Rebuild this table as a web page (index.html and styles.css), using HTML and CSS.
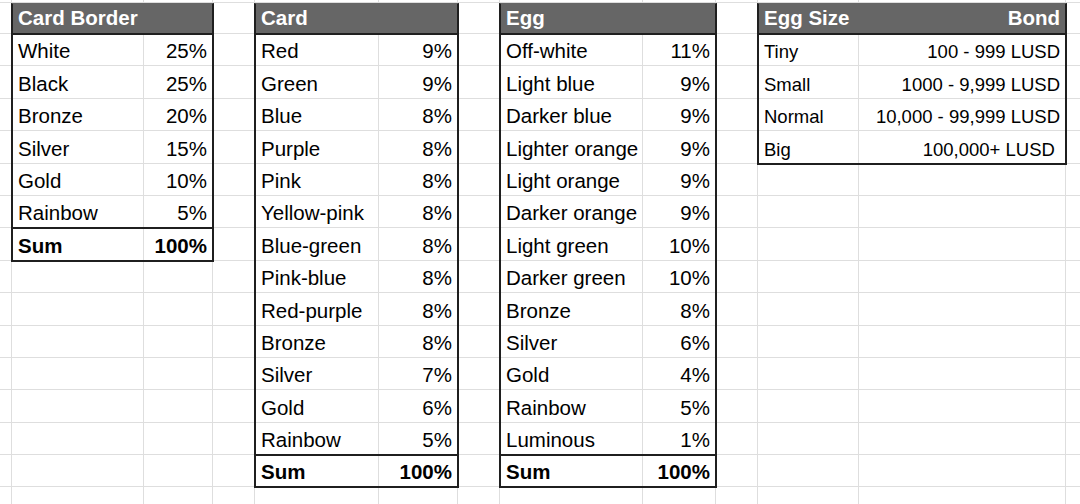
FILE: index.html
```html
<!DOCTYPE html>
<html lang="en">
<head>
<meta charset="utf-8">
<title>Sheet</title>
<link rel="stylesheet" href="styles.css">
</head>
<body>
<div class="sheet">
  <div class="tbl t-border">
    <div class="row head"><div class="cell">Card Border</div><div class="cell num"></div></div>
    <div class="row"><div class="cell">White</div><div class="cell num">25%</div></div>
    <div class="row"><div class="cell">Black</div><div class="cell num">25%</div></div>
    <div class="row"><div class="cell">Bronze</div><div class="cell num">20%</div></div>
    <div class="row"><div class="cell">Silver</div><div class="cell num">15%</div></div>
    <div class="row"><div class="cell">Gold</div><div class="cell num">10%</div></div>
    <div class="row"><div class="cell">Rainbow</div><div class="cell num">5%</div></div>
    <div class="row sum"><div class="cell">Sum</div><div class="cell num">100%</div></div>
  </div>

  <div class="tbl t-card">
    <div class="row head"><div class="cell">Card</div><div class="cell num"></div></div>
    <div class="row"><div class="cell">Red</div><div class="cell num">9%</div></div>
    <div class="row"><div class="cell">Green</div><div class="cell num">9%</div></div>
    <div class="row"><div class="cell">Blue</div><div class="cell num">8%</div></div>
    <div class="row"><div class="cell">Purple</div><div class="cell num">8%</div></div>
    <div class="row"><div class="cell">Pink</div><div class="cell num">8%</div></div>
    <div class="row"><div class="cell">Yellow-pink</div><div class="cell num">8%</div></div>
    <div class="row"><div class="cell">Blue-green</div><div class="cell num">8%</div></div>
    <div class="row"><div class="cell">Pink-blue</div><div class="cell num">8%</div></div>
    <div class="row"><div class="cell">Red-purple</div><div class="cell num">8%</div></div>
    <div class="row"><div class="cell">Bronze</div><div class="cell num">8%</div></div>
    <div class="row"><div class="cell">Silver</div><div class="cell num">7%</div></div>
    <div class="row"><div class="cell">Gold</div><div class="cell num">6%</div></div>
    <div class="row"><div class="cell">Rainbow</div><div class="cell num">5%</div></div>
    <div class="row sum"><div class="cell">Sum</div><div class="cell num">100%</div></div>
  </div>

  <div class="tbl t-egg">
    <div class="row head"><div class="cell">Egg</div><div class="cell num"></div></div>
    <div class="row"><div class="cell">Off-white</div><div class="cell num">11%</div></div>
    <div class="row"><div class="cell">Light blue</div><div class="cell num">9%</div></div>
    <div class="row"><div class="cell">Darker blue</div><div class="cell num">9%</div></div>
    <div class="row"><div class="cell">Lighter orange</div><div class="cell num">9%</div></div>
    <div class="row"><div class="cell">Light orange</div><div class="cell num">9%</div></div>
    <div class="row"><div class="cell">Darker orange</div><div class="cell num">9%</div></div>
    <div class="row"><div class="cell">Light green</div><div class="cell num">10%</div></div>
    <div class="row"><div class="cell">Darker green</div><div class="cell num">10%</div></div>
    <div class="row"><div class="cell">Bronze</div><div class="cell num">8%</div></div>
    <div class="row"><div class="cell">Silver</div><div class="cell num">6%</div></div>
    <div class="row"><div class="cell">Gold</div><div class="cell num">4%</div></div>
    <div class="row"><div class="cell">Rainbow</div><div class="cell num">5%</div></div>
    <div class="row"><div class="cell">Luminous</div><div class="cell num">1%</div></div>
    <div class="row sum"><div class="cell">Sum</div><div class="cell num">100%</div></div>
  </div>

  <div class="tbl t-size">
    <div class="row head"><div class="cell">Egg Size</div><div class="cell num">Bond</div></div>
    <div class="row"><div class="cell">Tiny</div><div class="cell num">100 - 999 LUSD</div></div>
    <div class="row"><div class="cell">Small</div><div class="cell num">1000 - 9,999 LUSD</div></div>
    <div class="row"><div class="cell">Normal</div><div class="cell num">10,000 - 99,999 LUSD</div></div>
    <div class="row"><div class="cell">Big</div><div class="cell num">100,000+ LUSD&nbsp;</div></div>
  </div>
</div>
</body>
</html>
```

FILE: styles.css
```css
* {
  box-sizing: border-box;
  margin: 0;
  padding: 0;
}

html,
body {
  background: #ffffff;
}

body {
  width: 1080px;
  height: 504px;
  overflow: hidden;
  font-family: "Liberation Sans", Arial, Helvetica, sans-serif;
  color: #000000;
}

/* spreadsheet canvas with its light gridlines */
.sheet {
  --grid: #dedede;
  height: 504px;
  display: flex;
  align-items: flex-start;
  gap: 40px;
  padding: 3px 0 0 11px;
  background-image:
    linear-gradient(to right,
      transparent 0 11px, var(--grid) 11px 12px,
      transparent 12px 143px, var(--grid) 143px 144px,
      transparent 144px 212px, var(--grid) 212px 213px,
      transparent 213px 254px, var(--grid) 254px 255px,
      transparent 255px 378px, var(--grid) 378px 379px,
      transparent 379px 457px, var(--grid) 457px 458px,
      transparent 458px 499px, var(--grid) 499px 500px,
      transparent 500px 642px, var(--grid) 642px 643px,
      transparent 643px 715px, var(--grid) 715px 716px,
      transparent 716px 757px, var(--grid) 757px 758px,
      transparent 758px 858px, var(--grid) 858px 859px,
      transparent 859px 1065px, var(--grid) 1065px 1066px,
      transparent 1066px 1080px),
    linear-gradient(to bottom,
      transparent 0 2px, var(--grid) 2px 3px,
      transparent 3px 33px, var(--grid) 33px 34px,
      transparent 34px 65px, var(--grid) 65px 66px,
      transparent 66px 98px, var(--grid) 98px 99px,
      transparent 99px 130px, var(--grid) 130px 131px,
      transparent 131px 163px, var(--grid) 163px 164px,
      transparent 164px 195px, var(--grid) 195px 196px,
      transparent 196px 227px, var(--grid) 227px 228px,
      transparent 228px 260px, var(--grid) 260px 261px,
      transparent 261px 292px, var(--grid) 292px 293px,
      transparent 293px 325px, var(--grid) 325px 326px,
      transparent 326px 357px, var(--grid) 357px 358px,
      transparent 358px 389px, var(--grid) 389px 390px,
      transparent 390px 422px, var(--grid) 422px 423px,
      transparent 423px 454px, var(--grid) 454px 455px,
      transparent 455px 486px, var(--grid) 486px 487px,
      transparent 487px 504px);
}

/* a bordered range of cells */
.tbl {
  background: #ffffff;
  border: 2px solid #1f1f1f;
  border-top: 1px solid #666666;
  font-size: 20.5px;
}

.t-border { --c1: 130px; --c2: 69px; }
.t-card   { --c1: 122px; --c2: 79px; }
.t-egg    { --c1: 141px; --c2: 73px; }
.t-size   { --c1: 99px;  --c2: 207px; }

.row {
  display: grid;
  grid-template-columns: var(--c1) var(--c2);
  height: 32px;
  border-top: 1px solid var(--grid, #dedede);
}

.row:nth-child(3),
.row:nth-child(5),
.row:nth-child(8),
.row:nth-child(10),
.row:nth-child(13) {
  height: 33px;
}

.row.head {
  height: 29px;
  border-top: 0;
  background: #666666;
  color: #ffffff;
  font-weight: bold;
}

.row.head + .row {
  border-top: 2px solid #1f1f1f;
}

.row.sum {
  border-top: 2px solid #1f1f1f;
  font-weight: bold;
}

.cell {
  display: flex;
  align-items: flex-end;
  padding: 0 5px 2px 5px;
  white-space: nowrap;
  overflow: hidden;
}

.row.head .cell {
  padding-bottom: 3px;
}

.cell.num {
  justify-content: flex-end;
  border-left: 1px solid #dedede;
}

.row.head .cell.num {
  border-left: 0;
}

.t-size .row:not(.head) {
  font-size: 18.5px;
}
```
